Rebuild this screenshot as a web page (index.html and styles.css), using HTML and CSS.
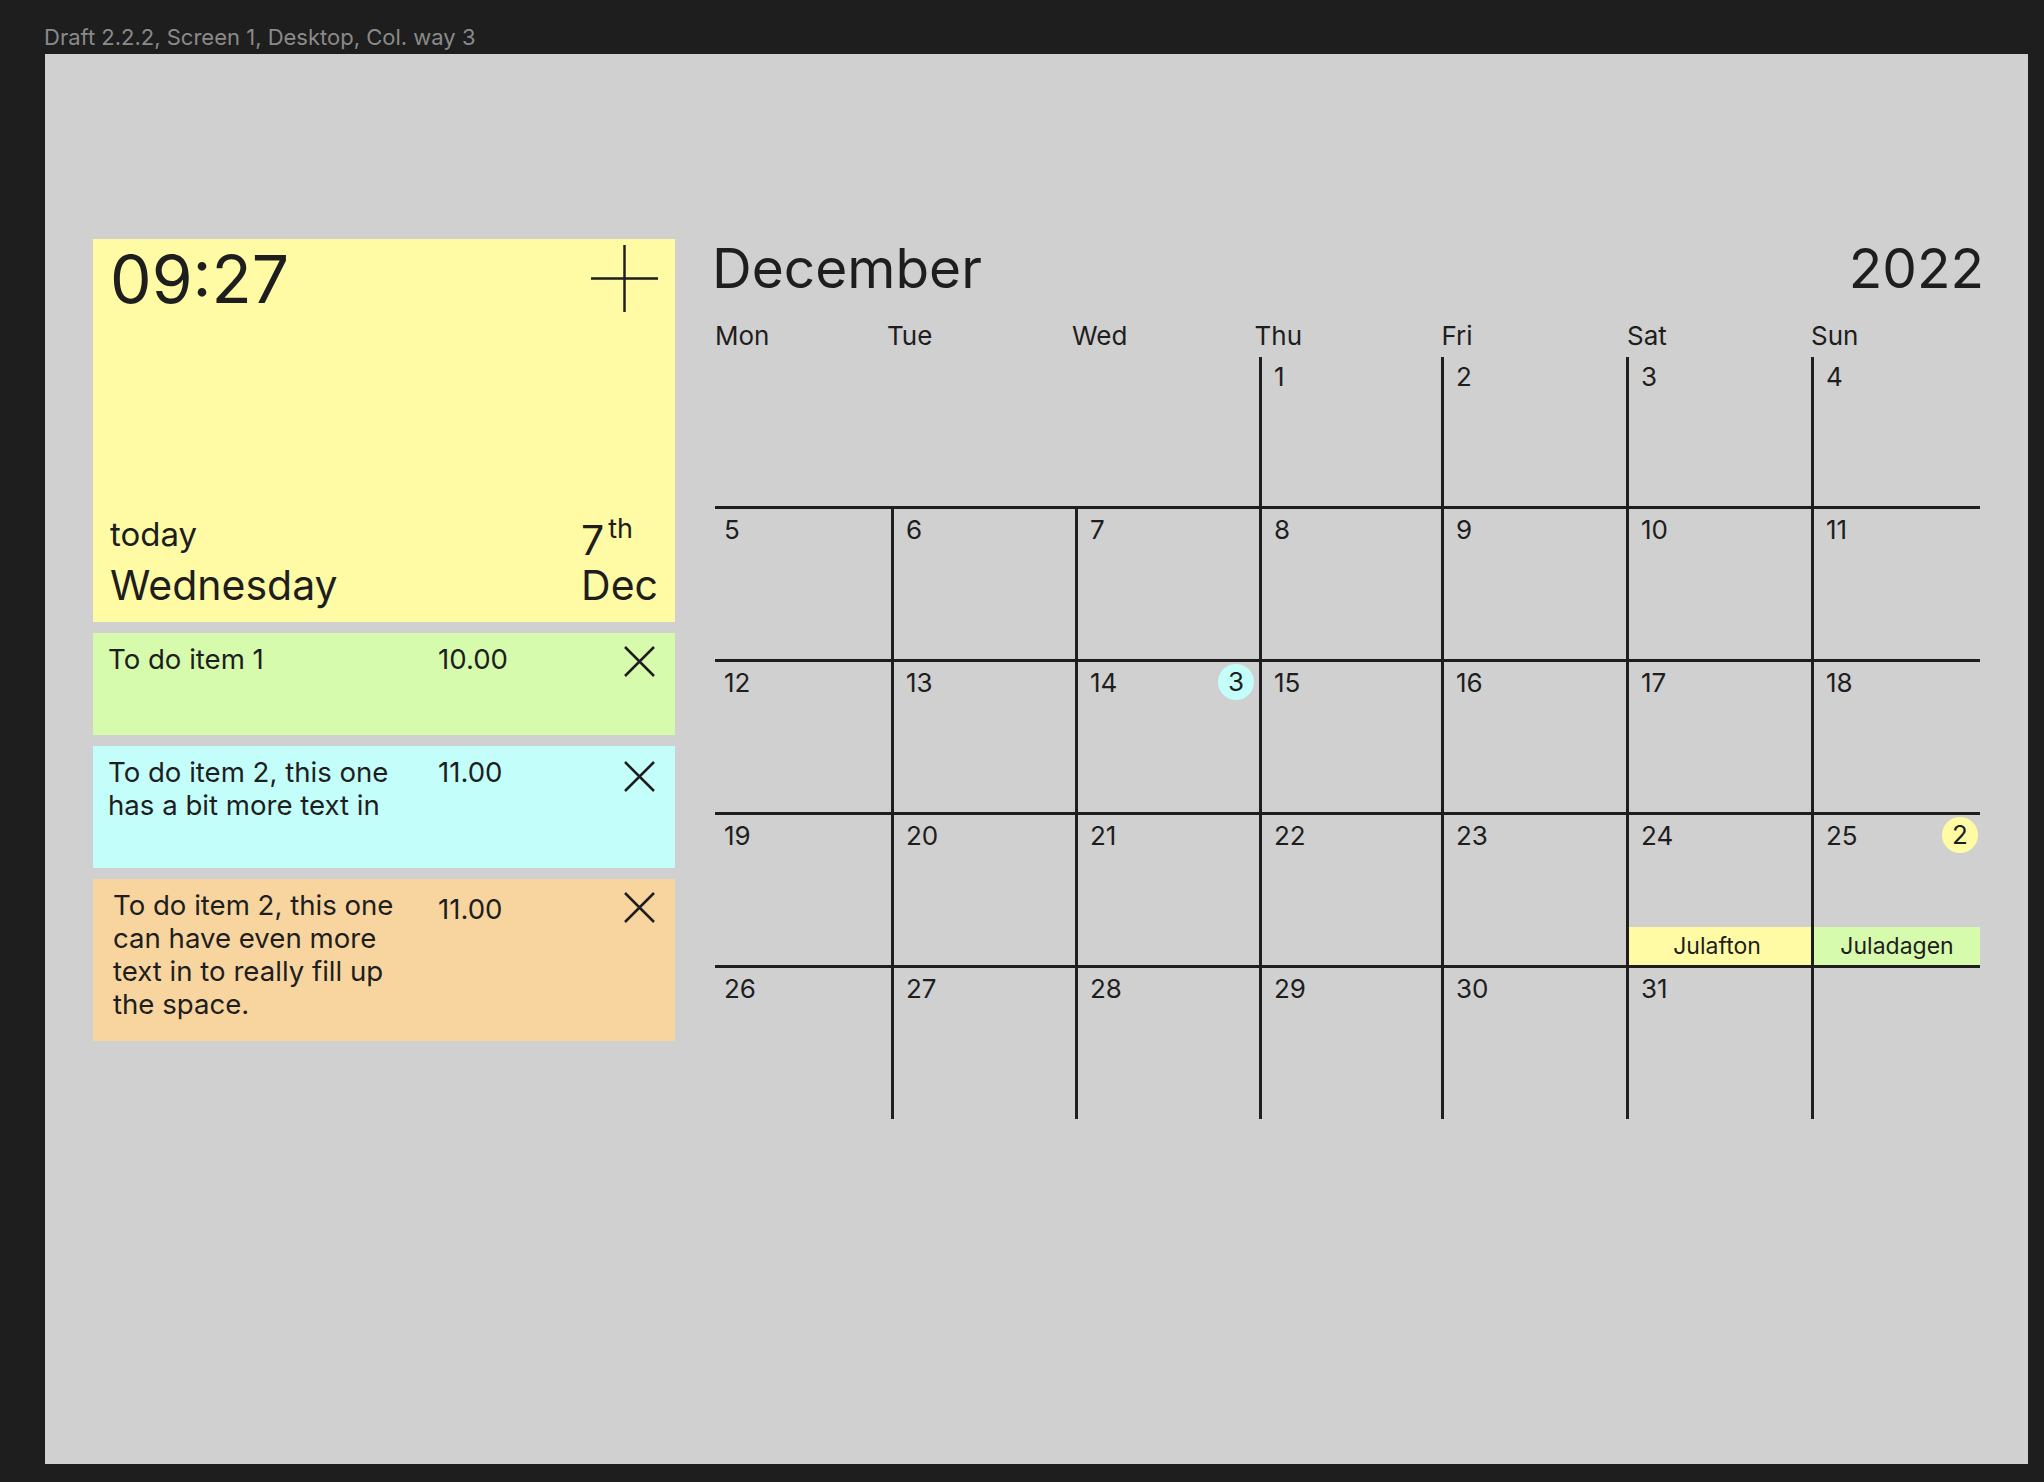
FILE: index.html
```html
<!DOCTYPE html>
<html lang="en">
<head>
<meta charset="utf-8">
<title>Draft 2.2.2, Screen 1, Desktop, Col. way 3</title>
<link rel="stylesheet" href="styles.css">
</head>
<body>
<div class="frame-label">Draft 2.2.2, Screen 1, Desktop, Col. way 3</div>
<main class="frame">
  <aside class="side">
    <section class="clock">
      <div class="clock__top">
        <div class="clock__time">09:27</div>
        <svg class="icon-plus" viewBox="0 0 68 68" aria-label="Add"><path d="M34 0V68M0 34H68" stroke="currentColor" stroke-width="2.5" fill="none"/></svg>
      </div>
      <div class="clock__bottom">
        <div class="clock__day">
          <div class="clock__today">today</div>
          <div class="clock__weekday">Wednesday</div>
        </div>
        <div class="clock__date">
          <div class="clock__num">7<span class="clock__ord">th</span></div>
          <div class="clock__month">Dec</div>
        </div>
      </div>
    </section>

    <div class="todo todo--green">
      <div class="todo__text">To do item 1</div>
      <div class="todo__time">10.00</div>
      <svg class="todo__close" viewBox="0 0 31 31" aria-label="Remove"><path d="M1 1L30 30M30 1L1 30" stroke="currentColor" stroke-width="2.5" fill="none"/></svg>
    </div>
    <div class="todo todo--cyan">
      <div class="todo__text">To do item 2, this one has a bit more text in</div>
      <div class="todo__time">11.00</div>
      <svg class="todo__close" viewBox="0 0 31 31" aria-label="Remove"><path d="M1 1L30 30M30 1L1 30" stroke="currentColor" stroke-width="2.5" fill="none"/></svg>
    </div>
    <div class="todo todo--orange">
      <div class="todo__text">To do item 2, this one can have even more text in to really fill up the space.</div>
      <div class="todo__time">11.00</div>
      <svg class="todo__close" viewBox="0 0 31 31" aria-label="Remove"><path d="M1 1L30 30M30 1L1 30" stroke="currentColor" stroke-width="2.5" fill="none"/></svg>
    </div>
  </aside>

  <section class="cal">
    <header class="cal__head">
      <div class="cal__month">December</div>
      <div class="cal__year">2022</div>
    </header>
    <div class="cal__weekdays">
      <div>Mon</div><div>Tue</div><div>Wed</div><div>Thu</div><div>Fri</div><div>Sat</div><div>Sun</div>
    </div>
    <div class="cal__grid">
      <div class="day day--blank"></div>
      <div class="day day--blank"></div>
      <div class="day day--blank"></div>
      <div class="day"><div class="day__head"><span>1</span></div></div>
      <div class="day"><div class="day__head"><span>2</span></div></div>
      <div class="day"><div class="day__head"><span>3</span></div></div>
      <div class="day"><div class="day__head"><span>4</span></div></div>

      <div class="day"><div class="day__head"><span>5</span></div></div>
      <div class="day"><div class="day__head"><span>6</span></div></div>
      <div class="day"><div class="day__head"><span>7</span></div></div>
      <div class="day"><div class="day__head"><span>8</span></div></div>
      <div class="day"><div class="day__head"><span>9</span></div></div>
      <div class="day"><div class="day__head"><span>10</span></div></div>
      <div class="day"><div class="day__head"><span>11</span></div></div>

      <div class="day"><div class="day__head"><span>12</span></div></div>
      <div class="day"><div class="day__head"><span>13</span></div></div>
      <div class="day"><div class="day__head day__head--inset"><span>14</span><span class="badge badge--cyan">3</span></div></div>
      <div class="day"><div class="day__head"><span>15</span></div></div>
      <div class="day"><div class="day__head"><span>16</span></div></div>
      <div class="day"><div class="day__head"><span>17</span></div></div>
      <div class="day"><div class="day__head"><span>18</span></div></div>

      <div class="day"><div class="day__head"><span>19</span></div></div>
      <div class="day"><div class="day__head"><span>20</span></div></div>
      <div class="day"><div class="day__head"><span>21</span></div></div>
      <div class="day"><div class="day__head"><span>22</span></div></div>
      <div class="day"><div class="day__head"><span>23</span></div></div>
      <div class="day"><div class="day__head"><span>24</span></div><div class="event event--yellow">Julafton</div></div>
      <div class="day"><div class="day__head"><span>25</span><span class="badge badge--yellow">2</span></div><div class="event event--green">Juladagen</div></div>

      <div class="day"><div class="day__head"><span>26</span></div></div>
      <div class="day"><div class="day__head"><span>27</span></div></div>
      <div class="day"><div class="day__head"><span>28</span></div></div>
      <div class="day"><div class="day__head"><span>29</span></div></div>
      <div class="day"><div class="day__head"><span>30</span></div></div>
      <div class="day"><div class="day__head"><span>31</span></div></div>
      <div class="day"></div>
    </div>
  </section>
</main>
</body>
</html>
```

FILE: styles.css
```css
* { box-sizing: border-box; }

html, body {
  margin: 0;
  padding: 0;
}

body {
  background: #1e1e1e;
  font-family: Inter, "Noto Sans", "Liberation Sans", sans-serif;
  color: #1e1e1e;
  padding-top: 24px;
  width: 2044px;
  height: 1482px;
  overflow: hidden;
}

.frame-label {
  padding-left: 44px;
  font-size: 22px;
  line-height: 1.2;
  color: #8a8a8a;
}

.frame {
  margin: 4px 0 0 45px;
  width: 1983px;
  height: 1410px;
  background: #d0d0d0;
  padding: 185px 0 0 48px;
  display: flex;
  align-items: flex-start;
  gap: 40px;
}

/* ---------- left column ---------- */
.side {
  width: 582px;
  display: flex;
  flex-direction: column;
  gap: 11px;
}

.clock {
  height: 383px;
  background: #fffba5;
  padding: 7px 17px 12px 17px;
  display: flex;
  flex-direction: column;
  justify-content: space-between;
}

.clock__top {
  display: flex;
  justify-content: space-between;
  align-items: flex-start;
}

.clock__time {
  font-size: 66px;
  line-height: 1;
}

.icon-plus {
  width: 67px;
  height: 67px;
  margin-top: -1px;
  color: #1e1e1e;
}

.clock__bottom {
  display: flex;
  justify-content: space-between;
  align-items: flex-end;
}

.clock__today {
  font-size: 33px;
  line-height: 1.2;
  margin-bottom: 7px;
}

.clock__weekday {
  font-size: 41px;
  line-height: 1.2;
}

.clock__num {
  font-size: 41px;
  line-height: 41px;
}

.clock__ord {
  font-size: 27px;
  line-height: 0;
  vertical-align: 17px;
  margin-left: 4px;
}

.clock__month {
  font-size: 41px;
  line-height: 1.2;
}

.todo {
  display: grid;
  grid-template-columns: 330px 1fr 31px;
  align-items: start;
  padding: 10px 20px 0 15px;
  font-size: 27.6px;
  line-height: 33px;
}

.todo__text {
  padding-right: 18px;
}

.todo__close {
  width: 31px;
  height: 31px;
  margin-top: 3px;
  color: #1e1e1e;
}

.todo--green { background: #d6fbad; height: 102px; }
.todo--cyan { background: #c4fefa; height: 122px; }
.todo--orange { background: #f8d59e; height: 162px; }
.todo--cyan .todo__close { margin-top: 5px; }
.todo--orange .todo__text { padding-left: 5px; }
.todo--orange .todo__time { padding-top: 4px; }

/* ---------- calendar ---------- */
.cal {
  width: 1265px;
  margin-top: 2px;
}

.cal__head {
  display: flex;
  justify-content: space-between;
  margin: 0 -4px 0 -3px;
  font-size: 55px;
  line-height: 1;
}

.cal__weekdays {
  margin-top: 24px;
  display: grid;
  grid-template-columns: 172px 185px 182.5px 187px 185.5px 184px 169px;
  font-size: 26px;
  line-height: 1.2;
}

.cal__grid {
  margin-top: 5px;
  display: grid;
  grid-template-columns: 176px 184px 184px 182px 185px 185px 169px;
  grid-template-rows: 149px 153px 153px 153px 154px;
}

.day {
  border-top: 3px solid #1e1e1e;
  border-left: 3px solid #1e1e1e;
  display: flex;
  flex-direction: column;
  font-size: 26px;
  line-height: 1.2;
}

.day:nth-child(-n+7) { border-top: none; }
.day:nth-child(7n+1) { border-left: none; }
.day--blank { border-left: none; }

.day__head {
  display: flex;
  justify-content: space-between;
  align-items: flex-start;
  padding: 5px 2px 0 12px;
}

.day:nth-child(-n+7) .day__head { padding-top: 4px; }

.day__head--inset { padding-right: 5px; }

.day:nth-child(7n+1) .day__head { padding-left: 9px; }

.badge {
  width: 36px;
  height: 36px;
  border-radius: 50%;
  margin-top: -3px;
  display: flex;
  align-items: center;
  justify-content: center;
}

.badge--cyan { background: #c4fefa; }
.badge--yellow { background: #fffba5; }

.event {
  margin-top: auto;
  height: 38px;
  line-height: 38px;
  font-size: 23px;
  text-align: center;
  padding-right: 6px;
}

.event--green { padding-right: 0; }

.event--yellow { background: #fffba5; }
.event--green { background: #d6fbad; }
```
